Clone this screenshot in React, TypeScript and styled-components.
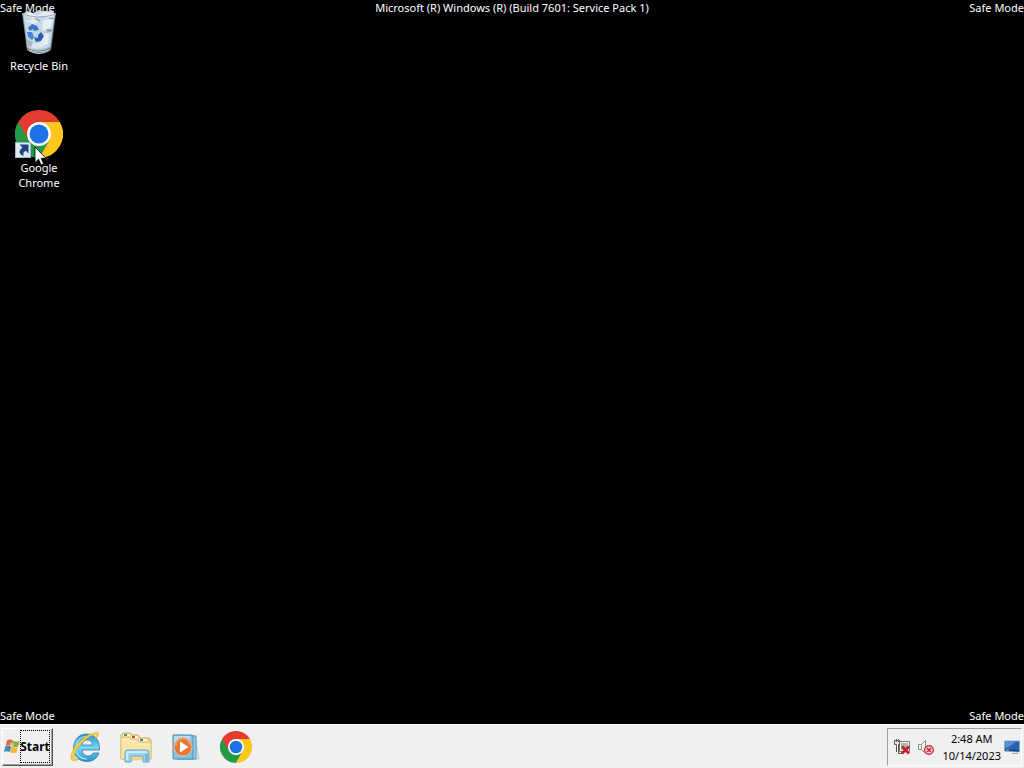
import React from "react";
import styled, { createGlobalStyle } from "styled-components";

const GlobalStyle = createGlobalStyle`
  *, *::before, *::after { box-sizing: border-box; }
  body {
    margin: 0;
    background: #000;
    font-family: "Noto Sans", "Open Sans", sans-serif;
    font-size: 11px;
    line-height: 15px;
  }
  svg { display: block; }
`;

const Screen = styled.div`
  position: relative;
  display: flex;
  flex-direction: column;
  min-height: 100vh;
  overflow: hidden;
  background: #000;
  color: #fff;
`;

const Desktop = styled.main`
  flex: 1;
  display: flex;
  flex-direction: column;
`;

const Banner = styled.header`
  display: grid;
  grid-template-columns: 1fr auto 1fr;
  height: 8px;
  white-space: nowrap;
`;

const BannerText = styled.span<{ $end?: boolean }>`
  text-align: ${(p) => (p.$end ? "right" : "left")};
`;

const IconColumn = styled.div`
  position: relative;
  flex: 1;
  display: flex;
  flex-direction: column;
  align-items: flex-start;
  gap: 37px;
`;

const DesktopIcon = styled.button`
  display: flex;
  flex-direction: column;
  align-items: center;
  gap: 2px;
  width: 78px;
  padding: 0;
  border: 0;
  background: transparent;
  color: #fff;
  font: inherit;
`;

const IconLabel = styled.span`
  max-width: 64px;
  text-align: center;
`;

const Footer = styled.div`
  display: flex;
  justify-content: space-between;
  padding-bottom: 1px;
`;

const Pointer = styled.svg`
  position: absolute;
  left: 34px;
  top: 146px;
  pointer-events: none;
`;

const Taskbar = styled.footer`
  display: flex;
  align-items: stretch;
  height: 44px;
  padding: 3px 2px 2px;
  border-top: 1px solid #fff;
  background: #f0f0f0;
  color: #000;
`;

const StartButton = styled.button`
  display: flex;
  align-items: center;
  width: 51px;
  padding: 0 2px 2px 1px;
  border: 1px solid;
  border-color: #fff #555 #555 #fff;
  box-shadow: inset -1px -1px #a0a0a0;
  background: #f0f0f0;
  color: #000;
  font: inherit;
  font-size: 12px;
  font-weight: 700;
`;

const StartText = styled.span`
  display: flex;
  align-items: center;
  justify-content: center;
  width: 30px;
  height: 33px;
  border: 1px dotted #000;
`;

const Pinned = styled.nav`
  display: flex;
  align-items: center;
  flex: 1;
  gap: 2px;
  margin-left: 9px;
`;

const PinnedButton = styled.button`
  display: flex;
  align-items: center;
  justify-content: center;
  width: 48px;
  height: 38px;
  padding: 0;
  border: 0;
  background: transparent;
`;

const Tray = styled.aside`
  display: flex;
  align-items: center;
  gap: 8px;
  padding: 0 1px 0 6px;
  border: 1px solid;
  border-color: #a0a0a0 #fff #fff #a0a0a0;
`;

const TrayButton = styled.button`
  padding: 0;
  border: 0;
  background: transparent;
`;

const Clock = styled.time`
  text-align: center;
  line-height: 17px;
`;

const TrayEnd = styled.div`
  display: flex;
  align-items: center;
  gap: 3px;
`;

function ChromeLogo({ size, shortcut }: { size: number; shortcut?: boolean }) {
  return (
    <svg width={size} height={size} viewBox="0 0 48 48" aria-hidden="true">
      <path d="M24 24 L3.2 12 A24 24 0 0 0 24 48 L34.4 30Z" fill="#249a48" />
      <path d="M24 12 H44.8 A24 24 0 0 1 24 48 L34.4 30Z" fill="#fcc61c" />
      <path d="M24 12 H44.8 A24 24 0 0 0 3.2 12 L13.6 30Z" fill="#e33b2e" />
      <circle cx="24" cy="24" r="12" fill="#fff" />
      <circle cx="24" cy="24" r="9.5" fill="#1d72e8" />
      {shortcut && (
        <g>
          <rect x="0.5" y="32.5" width="15" height="15" fill="#dfe8ef" stroke="#9eb4c8" />
          <path d="M4.5 34.5 H13.5 V43.5 L10.8 40.8 C8.5 42 8 43.5 8.5 46 C3.5 44 3.5 40.5 7.5 37.5Z" fill="#1d4582" />
        </g>
      )}
    </svg>
  );
}

function RecycleBin() {
  return (
    <svg width="48" height="48" viewBox="0 0 48 48" aria-hidden="true">
      <defs>
        <linearGradient id="bin" x1="0" x2="1">
          <stop offset="0" stopColor="#71818e" />
          <stop offset="0.25" stopColor="#b9cbd9" />
          <stop offset="0.7" stopColor="#a4b6c3" />
          <stop offset="1" stopColor="#5e6c75" />
        </linearGradient>
      </defs>
      <path d="M7 5 L12 42 Q24 50 36 42 L41 5Z" fill="url(#bin)" />
      <path d="M8 6 L12 3 L18 5 L24 2 L31 4 L37 2 L40 6 L35 39 Q24 43 13 39Z" fill="#c6d8e6" />
      <path d="M8 7 L15 4 L22 8 L29 3 L40 6 L34 10 L26 8 L20 11Z" fill="#e8edf1" />
      <path d="M28 12 L38 11 L35 20 L27 23Z M25 28 L34 24 L33 36 L26 38Z M11 13 L18 11 L23 14 L18 16Z" fill="#e6edf2" />
      <path d="M14 31 L20 36 L26 34 L30 38 L22 41 L14 39Z" fill="#dae5ed" />
      <path d="M31 22 L37 20 L36 24 L32 25Z M12 31 L18 34 L16 39 L13 38Z" fill="#a3b5c4" />
      <path d="M34 10 L39 11 M32 22 L37 23 M20 10 L25 13" stroke="#7a8b9a" />
      <path d="M7 6 Q24 12 41 6" fill="none" stroke="#9aa8b3" />
      <path d="M12 40 Q24 46 36 40 L35 42 Q24 48 13 42Z" fill="#5d6a73" />
      <path d="M14 42 Q24 46 34 42" fill="none" stroke="#cbd4d9" />
      <path d="M13 20 L17 16 L22 18 L24 22 L19 23 L18 21 L15 23Z" fill="#3478c8" />
      <path d="M12 24 L17 24 L19 29 L17 32 L13 29Z" fill="#4a86cf" />
      <path d="M19 29 L23 30 L23 27 L26 24 L29 28 L26 33 L21 34Z" fill="#285fb0" />
    </svg>
  );
}

function WindowsFlag() {
  return (
    <svg width="17" height="17" viewBox="0 0 16 16" aria-hidden="true">
      <path d="M3 2 Q6 0 9 2 L7.5 7.5 Q4.5 5.5 1.5 7.5Z" fill="#df6a38" />
      <path d="M9.2 2.2 Q12.5 4 15.8 2.5 L14.2 8 Q11 9.5 7.7 7.7Z" fill="#86b043" />
      <path d="M1.3 7.9 Q4 6.2 7.3 7.9 L5.7 13.6 Q3 12 0 13.5Z" fill="#4286bf" />
      <path d="M7.6 8.1 Q11 10 14 8.5 L12.4 14 Q9.5 15.5 6 13.9Z" fill="#f0bb3b" />
      <path d="M6 4 L10 5 L9 9 L6 8Z" fill="#fff4be" opacity="0.5" />
    </svg>
  );
}

function InternetExplorer() {
  return (
    <svg width="32" height="32" viewBox="0 0 32 32" aria-hidden="true">
      <defs>
        <linearGradient id="ie" x1="0" y1="0" x2="0" y2="1">
          <stop offset="0" stopColor="#2c91c8" />
          <stop offset="0.5" stopColor="#78d5f3" />
          <stop offset="1" stopColor="#2991c5" />
        </linearGradient>
      </defs>
      <path
        fillRule="evenodd"
        d="M16.5 3 C25 3 30 9 29.5 19 H12 C12.5 23 15 25 18 25 C20.5 25 22 24 23 22 H29 C27 27.5 23 30.5 17 30.5 C8.5 30.5 3.5 24.5 3.5 17 C3.5 9 9 3 16.5 3Z M12 14 H22.5 C22 10.5 20 9 17.2 9 C14.3 9 12.5 11 12 14Z"
        fill="url(#ie)"
        stroke="#2279a8"
        strokeWidth="0.7"
      />
      <path d="M6 14 C8 7 14 4.5 19 5.5 M6 20 C8 26 12 28 17 28" fill="none" stroke="#a4e6fb" strokeWidth="1.2" />
      <path
        d="M25 8 C30 4 29.5 1.2 26 1.5 C17 2 2.5 15 1 25 C0.2 30.5 4.5 31 9 28 C5.5 29 3.8 27.5 4.5 24 C6 16 17 5.5 24 3.8 C27 3 27 5 25 8Z"
        fill="#f6cf4a"
        stroke="#d3a51c"
        strokeWidth="0.5"
      />
    </svg>
  );
}

function Explorer() {
  return (
    <svg width="32" height="32" viewBox="0 0 32 32" aria-hidden="true">
      <path d="M1 28 V4 L3 2 H10 L12 4 H18 L20 7 H29 L31 9 V28Z" fill="#efd58a" stroke="#c9ac64" />
      <path d="M3 3 H10 V5 H3Z M11 5 H18 V7 H11Z M19 8 H27 V10 H19Z" fill="#fffbed" />
      <path d="M4 3 H7 V5 H4Z" fill="#42a25b" />
      <path d="M12 5 H15 V7 H12Z" fill="#bd4e2b" />
      <path d="M20 8 H23 V10 H20Z" fill="#3b80c7" />
      <path d="M1 7 H9 L11 9 H17 L19 12 H31 V28 H1Z" fill="#f9e5a7" stroke="#dbc178" strokeWidth="0.7" />
      <path d="M2 8 H9 L11 10 H16 L19 13 H30" fill="none" stroke="#fff4c9" />
      <path d="M11 30 V24 H23 V29" fill="#f1d58b" />
      <path d="M5 31 V21 Q5 19 8 19 H26 Q29 19 29 21 V31 H23 V25 H11 V31Z" fill="#9bd4ee" stroke="#68a7c8" />
      <path d="M7 29 V22 Q7 21 9 21 H27" fill="none" stroke="#d6f3ff" strokeWidth="1.5" />
      <path d="M25 23 H28 V30 H25Z" fill="#6fb9df" />
    </svg>
  );
}

function MediaPlayer() {
  return (
    <svg width="32" height="32" viewBox="0 0 32 32" aria-hidden="true">
      <path d="M10 4 L25 5 L29 28 L10 28Z" fill="#d5e9f2" stroke="#a2c5d5" strokeWidth="0.7" />
      <path d="M7 4 L26 5 V28 L7 28Z" fill="#9bd0e9" stroke="#4f94ba" />
      <path d="M3 4 H21 L23 5 V28 H3Z" fill="#82c1e1" stroke="#488fb8" />
      <path d="M4 5 H20 V16 L4 21Z" fill="#b8def0" />
      <circle cx="13" cy="16" r="9" fill="#e37734" stroke="#f0bd9a" />
      <path d="M6 15 A7 7 0 0 1 20 14" fill="none" stroke="#ed965f" strokeWidth="2" />
      <path d="M10 10.5 L18.5 16 L10 21.5Z" fill="#fff" />
    </svg>
  );
}

function NetworkIcon() {
  return (
    <svg width="16" height="16" viewBox="0 0 16 16" aria-hidden="true">
      <path d="M5.5 2.5 H15.5 V12.5 H5.5Z" fill="#f7f7f7" stroke="#777" />
      <path d="M7 4 H14 V11 H7Z" fill="#b5b1b1" />
      <path d="M0.5 1.5 H5.5 V5.5 H4.5 V14.5 H8 M0.5 1.5 V5.5 H2.5 V13" fill="none" stroke="#555" />
      <path d="M1 2 H5 V5 H1Z" fill="#e5e5e5" />
      <path d="M2.5 0 V3 M4.5 0 V3" stroke="#666" />
      <path d="M8 7.5 L15 14.5 M15 7.5 L8 14.5" stroke="#bd252b" strokeWidth="2.8" />
    </svg>
  );
}

function MutedIcon() {
  return (
    <svg width="16" height="16" viewBox="0 0 16 16" aria-hidden="true">
      <path d="M0.5 5.5 H3.5 L7.5 1.5 V14.5 L3.5 10.5 H0.5Z" fill="#fafafa" stroke="#888" />
      <path d="M3.5 5.5 V10.5" stroke="#999" />
      <circle cx="11" cy="11" r="4.3" fill="#f5dada" stroke="#cb343c" strokeWidth="1.4" />
      <path d="M9 9 L13 13 M13 9 L9 13" stroke="#c72932" strokeWidth="1.7" />
    </svg>
  );
}

function DesktopPeek() {
  return (
    <svg width="16" height="16" viewBox="0 0 16 16" aria-hidden="true">
      <path d="M0.5 2 H15.5 V13 L0.5 12Z" fill="#2861b2" stroke="#8baacb" />
      <path d="M1 2.5 H12 L5 8 L1 9Z" fill="#568fd2" />
      <path d="M1 10.5 L15 11 V12.5 L1 11.8Z" fill="#203d68" />
      <path d="M2 11 H5" stroke="#8ec3d4" />
      <path d="M8 14.5 H14" stroke="#9ba5ac" />
    </svg>
  );
}

export default function App() {
  return (
    <Screen>
      <GlobalStyle />
      <Desktop>
        <Banner>
          <BannerText>Safe Mode</BannerText>
          <BannerText>Microsoft (R) Windows (R) (Build 7601: Service Pack 1)</BannerText>
          <BannerText $end>Safe Mode</BannerText>
        </Banner>
        <IconColumn>
          <DesktopIcon>
            <RecycleBin />
            <IconLabel>Recycle Bin</IconLabel>
          </DesktopIcon>
          <DesktopIcon>
            <ChromeLogo size={48} shortcut />
            <IconLabel>Google Chrome</IconLabel>
          </DesktopIcon>
        </IconColumn>
        <Footer>
          <span>Safe Mode</span>
          <span>Safe Mode</span>
        </Footer>
      </Desktop>
      <Taskbar>
        <StartButton>
          <WindowsFlag />
          <StartText>Start</StartText>
        </StartButton>
        <Pinned aria-label="Pinned programs">
          <PinnedButton aria-label="Internet Explorer"><InternetExplorer /></PinnedButton>
          <PinnedButton aria-label="Windows Explorer"><Explorer /></PinnedButton>
          <PinnedButton aria-label="Windows Media Player"><MediaPlayer /></PinnedButton>
          <PinnedButton aria-label="Google Chrome"><ChromeLogo size={32} /></PinnedButton>
        </Pinned>
        <Tray>
          <TrayButton aria-label="Network"><NetworkIcon /></TrayButton>
          <TrayButton aria-label="Volume"><MutedIcon /></TrayButton>
          <TrayEnd>
            <Clock dateTime="2023-10-14T02:48">
              2:48 AM
              <br />
              10/14/2023
            </Clock>
            <TrayButton aria-label="Show desktop"><DesktopPeek /></TrayButton>
          </TrayEnd>
        </Tray>
      </Taskbar>
      <Pointer width="13" height="20" viewBox="0 0 13 20" aria-hidden="true">
        <path d="M1 1 V16.5 L4.6 13.2 L7 19 L9.6 17.9 L7.2 12.3 H12Z" fill="#fff" stroke="#000" strokeWidth="0.8" />
      </Pointer>
    </Screen>
  );
}
